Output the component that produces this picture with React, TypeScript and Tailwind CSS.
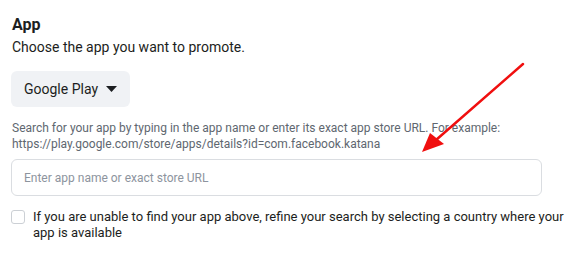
export default function App() {
  return (
    <div
      className="relative w-[579px] h-[255px] bg-white px-3 pt-[15px] text-[#1c1e21]"
      style={{ fontFamily: 'Roboto, "Liberation Sans", Arial, sans-serif' }}
    >
      <h2 className="text-[16px] font-bold leading-5">App</h2>
      <p className="text-[14px] leading-5 mt-[2px]">Choose the app you want to promote.</p>

      <button className="mt-[14px] -ml-[1px] flex items-center gap-2 h-[36px] px-[13px] rounded-[6px] bg-[#f0f2f5] text-[14px] text-[#1c1e21]">
        Google Play
        <svg width="11" height="6" viewBox="0 0 11 6">
          <path d="M0 0 L11 0 L5.5 6 Z" fill="#1c1e21" />
        </svg>
      </button>

      <p className="mt-[13px] text-[12px] leading-4 text-[#606770]">
        Search for your app by typing in the app name or enter its exact app store URL. For example:
        <br />
        https://play.google.com/store/apps/details?id=com.facebook.katana
      </p>

      <input
        className="mt-[7px] -ml-[1px] block w-[531px] h-[37px] rounded-[6px] border border-[#dadde1] px-3 text-[12px] outline-none placeholder:text-[#8d949e]"
        placeholder="Enter app name or exact store URL"
      />

      <label className="mt-[13px] -ml-[1px] flex items-start gap-2">
        <span className="mt-[1px] w-[14px] h-[14px] shrink-0 rounded-[3px] border border-[#ccd0d5] bg-white" />
        <span className="text-[13px] leading-4 text-[#1c1e21]">
          If you are unable to find your app above, refine your search by selecting a country where your app is available
        </span>
      </label>

      <svg
        className="absolute left-0 top-0 pointer-events-none"
        width="579"
        height="255"
        viewBox="0 0 579 255"
      >
        <line x1="523" y1="64" x2="436" y2="140" stroke="#f00f0f" strokeWidth="2.5" strokeLinecap="round" />
        <path d="M422 152 L430 133 L444 144 Z" fill="#f00f0f" />
      </svg>
    </div>
  );
}
